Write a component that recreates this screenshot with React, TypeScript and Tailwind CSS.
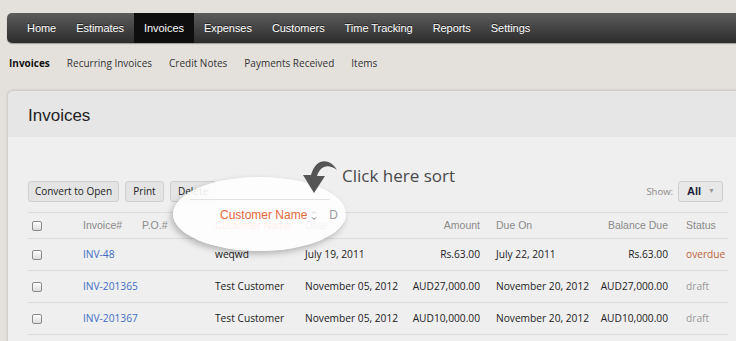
import { ChevronDown } from 'lucide-react'

// Invoices list page with a "click here sort" callout

const NAV = ['Home', 'Estimates', 'Invoices', 'Expenses', 'Customers', 'Time Tracking', 'Reports', 'Settings']
const SUBNAV = ['Invoices', 'Recurring Invoices', 'Credit Notes', 'Payments Received', 'Items']

const ROWS = [
  { id: 'INV-48', customer: 'weqwd', date: 'July 19, 2011', amount: 'Rs.63.00', due: 'July 22, 2011', balance: 'Rs.63.00', status: 'overdue' },
  { id: 'INV-201365', customer: 'Test Customer', date: 'November 05, 2012', amount: 'AUD27,000.00', due: 'November 20, 2012', balance: 'AUD27,000.00', status: 'draft' },
  { id: 'INV-201367', customer: 'Test Customer', date: 'November 05, 2012', amount: 'AUD10,000.00', due: 'November 20, 2012', balance: 'AUD10,000.00', status: 'draft' },
]

const cols = 'grid grid-cols-[55px_59px_73px_90px_95px_96px_94px_96px_42px] items-center whitespace-nowrap'

function Checkbox() {
  return (
    <span className="ml-[4px] block h-[10px] w-[10px] rounded-[2px] border border-[#8a8a8a] bg-linear-to-b from-white to-[#dcdcdc]" />
  )
}

export default function App() {
  return (
    <div className="relative h-[341px] w-[736px] overflow-hidden bg-[#e4e1dd] font-['Liberation_Sans',Arial,sans-serif]">
      {/* Top nav */}
      <div className="ml-[7px] mt-[13px] flex h-[30px] w-[740px] rounded-l-[5px] bg-linear-to-b from-[#5c5c5c] to-[#2d2d2d] pl-[10px] shadow-[0_1px_1px_rgba(0,0,0,0.3)]">
        {NAV.map(item => (
          <div
            key={item}
            className={`flex items-center px-[10px] text-[11px] tracking-[-0.05px] text-white [text-shadow:0_-1px_0_rgba(0,0,0,0.6)] ${
              item === 'Invoices' ? 'bg-[#0e0e0e]' : ''
            }`}
          >
            {item}
          </div>
        ))}
      </div>

      {/* Sub nav */}
      <div className="ml-[9px] flex h-[47px] gap-[17px] pt-[13px] font-['Open_Sans',sans-serif] text-[10px] text-[#333]">
        {SUBNAV.map((item, i) => (
          <span key={item} className={i === 0 ? 'font-bold text-[#111]' : ''}>
            {item}
          </span>
        ))}
      </div>

      {/* Panel */}
      <div className="ml-[7px] w-[740px] overflow-hidden rounded-tl-[6px] border-l border-t border-[#d2cfca] shadow-[0_0_2px_rgba(0,0,0,0.15)]">
        <div className="flex h-[46px] items-center bg-[#e6e6e6] pl-[20px] pt-[3px] text-[17px] text-[#222]">Invoices</div>
        <div className="h-[210px] bg-[#efefef] pl-[20px] pt-[44px]">
          <div className="flex h-[21px] w-[700px] items-start pr-[5px]">
            <div className="flex gap-[6px] font-['Open_Sans',sans-serif] text-[10px] text-[#222]">
              <button className="h-[21px] w-[91px] rounded-[3px] border border-[#cfcfcf] bg-[#e4e4e4]">Convert to Open</button>
              <button className="h-[21px] w-[39px] rounded-[3px] border border-[#cfcfcf] bg-[#e4e4e4]">Print</button>
              <button className="h-[21px] w-[46px] rounded-[3px] border border-[#cfcfcf] bg-[#e4e4e4]">Delete</button>
            </div>
            <div className="ml-auto flex items-start gap-[5px]">
              <span className="pt-[4px] font-['Open_Sans',sans-serif] text-[9.5px] text-[#888]">Show:</span>
              <div className="flex h-[21px] w-[45px] items-center justify-between rounded-[3px] border border-[#cfcfcf] bg-[#e8e8e8] pl-[8px] pr-[7px]">
                <span className="text-[11px] font-bold text-[#1d1d3a]">All</span>
                <span className="text-[7px] text-[#999]">▼</span>
              </div>
            </div>
          </div>

          {/* Table */}
          <div className="mt-[10px] w-[700px] border-t border-[#dcdcdc]">
            <div className={`${cols} h-[26px] border-b border-[#dcdcdc] text-[10.5px] text-[#8a8a8a]`}>
              <Checkbox />
              <span>Invoice#</span>
              <span>P.O.#</span>
              <span className="text-[#e5673b]">Customer Name</span>
              <span>Date</span>
              <span className="pr-[16px] text-right">Amount</span>
              <span>Due On</span>
              <span className="pr-[18px] text-right">Balance Due</span>
              <span>Status</span>
            </div>
            {ROWS.map(r => (
              <div
                key={r.id}
                className={`${cols} h-[32px] border-b border-[#dcdcdc] font-['Open_Sans',sans-serif] text-[10.2px] text-[#222]`}
              >
                <Checkbox />
                <span className="text-[#3e6ec5]">{r.id}</span>
                <span />
                <span>{r.customer}</span>
                <span>{r.date}</span>
                <span className="pr-[16px] text-right">{r.amount}</span>
                <span>{r.due}</span>
                <span className="pr-[18px] text-right">{r.balance}</span>
                <span className={r.status === 'overdue' ? 'text-[#c0633a]' : 'text-[#999]'}>{r.status}</span>
              </div>
            ))}
          </div>
        </div>
      </div>

      {/* Callout: spotlight on the Customer Name column */}
      <div className="absolute left-[173px] top-[177px] h-[74px] w-[173px] rounded-[50%] bg-white/90 shadow-[-2px_3px_6px_rgba(0,0,0,0.25)]" />
      <div className="absolute left-[190px] top-[199px] h-px w-[140px] bg-[#e2e2e2]" />
      <div className="absolute left-[220px] top-[206px] flex items-center text-[12px] text-[#e5673b]">
        <span>Customer Name</span>
        <span className="ml-[3px] flex flex-col items-center leading-none">
          <ChevronDown className="h-[7px] w-[8px] rotate-180 text-[#c8c8c8]" strokeWidth={2.5} />
          <ChevronDown className="-mt-[1px] h-[7px] w-[8px] text-[#444]" strokeWidth={2.5} />
        </span>
        <span className="ml-[11px] text-[#9a9a9a]">D</span>
      </div>

      <svg className="absolute left-[300px] top-[155px]" width="40" height="42" viewBox="0 0 40 42">
        <path d="M37 15 C30 3 16 2 11 20 L3 20 L14 38 L25 21 L17 21 C20 11 28 8 37 15 Z" fill="#555" />
      </svg>
      <div className="absolute left-[342px] top-[163px] font-['Open_Sans',sans-serif] text-[17px] text-[#4a4a4a]">Click here sort</div>
    </div>
  )
}
